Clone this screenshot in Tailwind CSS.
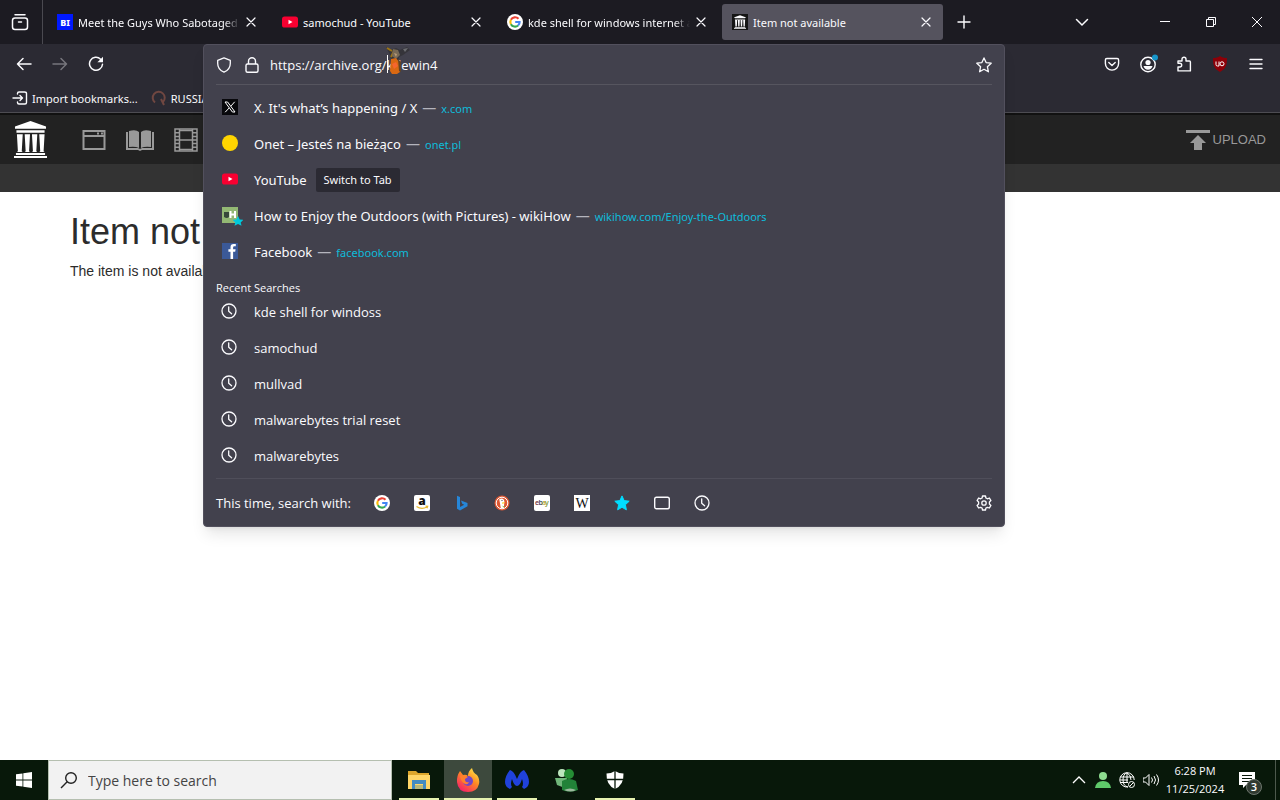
<!DOCTYPE html>
<html lang="en">
<head>
<meta charset="utf-8">
<title>Item not available</title>
<script src="https://cdn.jsdelivr.net/npm/@tailwindcss/browser@4"></script>
</head>
<body class="flex h-screen flex-col overflow-hidden bg-white font-['Open_Sans',sans-serif] text-[#fbfbfe]">
<svg class="hidden" aria-hidden="true">
  <symbol id="x" viewBox="0 0 16 16"><path d="M4 4l8 8M12 4l-8 8" fill="none" stroke="currentColor" stroke-width="1.2" stroke-linecap="round"/></symbol>
  <symbol id="yt" viewBox="0 0 16 16"><rect y="2.5" width="16" height="11" rx="2.6" fill="#f80031"/><path d="M6.500 5.700v4.600l4-2.300z" fill="#fff"/></symbol>
  <symbol id="google" viewBox="0 0 16 16"><circle cx="8" cy="8" r="8" fill="#fff"/><g fill="none" stroke-width="2.1"><path d="M11.500 4.800A4.700 4.700 0 0 0 3.900 5.800" stroke="#ea4335"/><path d="M3.900 5.800a4.700 4.700 0 0 0 0 4.400" stroke="#fbbc05"/><path d="M3.900 10.200a4.700 4.700 0 0 0 7.200 1.300" stroke="#34a853"/><path d="M11.100 11.500A4.600 4.600 0 0 0 12.600 8H8.200" stroke="#4285f4"/></g></symbol>
  <symbol id="temple" viewBox="0 0 34 38"><path d="M17 0L1 5.500V8h32V5.500zM2.500 9.500h29V12h-29zM3 13.500h6l-1 17.500 1 1H3l1-1zM11 13.500h5.500l-1 17.500 1 1H11l1-1zM18.500 13.500H24l-1 17.500 1 1h-5.500l1-1zM26 13.500h5.500l-1 17.500 1 1H26l1-1zM2 33h30v2H2zM0 36h34v2H0z" fill="currentColor"/></symbol>
  <symbol id="clock" viewBox="0 0 16 16"><g fill="none" stroke="currentColor" stroke-width="1.3" stroke-linecap="round" stroke-linejoin="round"><circle cx="8" cy="8" r="7"/><path d="M7.700 3.800v4.400l2.900 2.600"/></g></symbol>
  <symbol id="star" viewBox="0 0 16 16"><path d="M8 .9l2.100 4.700 5.100.6-3.800 3.500 1 5.100L8 12.300l-4.400 2.500 1-5.100L.8 6.200l5.100-.6z" stroke-linejoin="round"/></symbol>
</svg>

<div class="relative shrink-0 font-['Noto_Sans',sans-serif] text-[11px]">
  <!-- Tab strip -->
  <header class="flex h-11 items-center bg-[#1c1b22]">
    <button aria-label="Firefox View" class="mr-1 flex h-11 w-[43px] shrink-0 items-center justify-center border-r border-[#4a4950] pr-[2px]">
      <svg class="size-[18px]" viewBox="0 0 18 18" fill="none" stroke="currentColor" stroke-width="1.500" stroke-linecap="round"><path d="M4 1.800h10"/><rect x="1.500" y="5" width="15" height="11.500" rx="2.500"/><path d="M7.500 9h3"/></svg>
    </button>
    <nav class="flex min-w-0 items-center gap-1" aria-label="Tabs">
      <div class="flex h-9 w-[221px] min-w-0 items-center pl-[10px] pr-[9px]">
        <svg class="size-4 shrink-0" viewBox="0 0 16 16"><rect width="16" height="16" fill="#0019ff"/><text x="8" y="11.500" text-anchor="middle" font-size="9" font-weight="800" fill="#fff">BI</text></svg>
        <a href="#" class="ml-[5px] flex-1 overflow-hidden whitespace-nowrap pt-[2px] mask-r-from-90%">Meet the Guys Who Sabotaged</a>
        <button aria-label="Close tab" class="ml-[3px]"><svg class="size-4"><use href="#x"/></svg></button>
      </div>
      <div class="flex h-9 w-[221px] min-w-0 items-center pl-[10px] pr-[9px]">
        <svg class="size-4 shrink-0"><use href="#yt"/></svg>
        <a href="#" class="ml-[5px] flex-1 overflow-hidden whitespace-nowrap pt-[2px]">samochud - YouTube</a>
        <button aria-label="Close tab" class="ml-[3px]"><svg class="size-4"><use href="#x"/></svg></button>
      </div>
      <div class="flex h-9 w-[221px] min-w-0 items-center pl-[10px] pr-[9px]">
        <svg class="size-4 shrink-0"><use href="#google"/></svg>
        <a href="#" class="ml-[5px] flex-1 overflow-hidden whitespace-nowrap pt-[2px] mask-r-from-90%">kde shell for windows internet archive</a>
        <button aria-label="Close tab" class="ml-[3px]"><svg class="size-4"><use href="#x"/></svg></button>
      </div>
      <div class="flex h-9 w-[221px] min-w-0 items-center rounded-[3px] bg-[#55535e] pl-[10px] pr-[9px]">
        <span class="flex size-4 shrink-0 items-center justify-center bg-[#151515]"><svg class="h-[14px] w-3"><use href="#temple"/></svg></span>
        <a href="#" class="ml-[5px] flex-1 overflow-hidden whitespace-nowrap pt-[2px]">Item not available</a>
        <button aria-label="Close tab" class="ml-[3px]"><svg class="size-4"><use href="#x"/></svg></button>
      </div>
    </nav>
    <button aria-label="New tab" class="ml-[13px] shrink-0"><svg class="size-4" viewBox="0 0 16 16"><path d="M8 2v12M2 8h12" stroke="currentColor" stroke-width="1.400" stroke-linecap="round"/></svg></button>
    <div class="ml-auto flex shrink-0 items-center">
      <button aria-label="List all tabs" class="mr-[52px]"><svg class="size-4" viewBox="0 0 16 16"><path d="M2.500 5.500L8 11l5.500-5.500" fill="none" stroke="currentColor" stroke-width="1.500" stroke-linecap="round"/></svg></button>
      <button aria-label="Minimize" class="flex w-[46px] justify-center"><svg class="size-3" viewBox="0 0 12 12"><path d="M1 5.500h10" stroke="currentColor"/></svg></button>
      <button aria-label="Restore" class="flex w-[46px] justify-center"><svg class="size-3" viewBox="0 0 12 12" fill="none" stroke="currentColor"><path d="M1.500 3.500h7v7h-7zM3.500 3.500v-2h7v7h-2"/></svg></button>
      <button aria-label="Close" class="flex w-[46px] justify-center"><svg class="size-3" viewBox="0 0 12 12"><path d="M1 1l10 10M11 1L1 11" stroke="currentColor"/></svg></button>
    </div>
  </header>

  <!-- Toolbar -->
  <div class="flex h-10 items-center justify-between bg-[#2b2a33] px-2">
    <div class="flex gap-1">
      <button aria-label="Back" class="flex size-8 items-center justify-center"><svg class="size-4" viewBox="0 0 16 16" fill="none" stroke="currentColor" stroke-width="1.500" stroke-linecap="round" stroke-linejoin="round"><path d="M15 8H1.500M7 2.500L1.500 8 7 13.500"/></svg></button>
      <button aria-label="Forward" class="flex size-8 items-center justify-center text-[#77767d]"><svg class="size-4" viewBox="0 0 16 16" fill="none" stroke="currentColor" stroke-width="1.500" stroke-linecap="round" stroke-linejoin="round"><path d="M1 8h13.500M9 2.500L14.500 8 9 13.500"/></svg></button>
      <button aria-label="Reload" class="flex size-8 items-center justify-center"><svg class="size-4" viewBox="0 0 16 16"><path d="M12.600 3.200A6.500 6.500 0 1 0 14.500 8.300" fill="none" stroke="currentColor" stroke-width="1.500" stroke-linecap="round"/><path d="M15 .7v5.600H9.400z" fill="currentColor"/></svg></button>
    </div>
    <div class="flex gap-1">
      <button aria-label="Save to Pocket" class="flex size-8 items-center justify-center"><svg class="size-4" viewBox="0 0 16 16" fill="none" stroke="currentColor" stroke-width="1.400" stroke-linecap="round" stroke-linejoin="round"><path d="M2.800 2.500h10.400c.8 0 1.400.6 1.400 1.400V7.500a6.600 6.600 0 0 1-13.200 0V3.900c0-.8.6-1.400 1.400-1.400z"/><path d="M4.800 6.500L8 9.500l3.200-3"/></svg></button>
      <button aria-label="Account" class="flex size-8 items-center justify-center"><svg class="size-5" viewBox="0 0 20 20"><circle cx="10" cy="10.500" r="7.200" fill="none" stroke="currentColor" stroke-width="1.400"/><circle cx="10" cy="8.500" r="2.600" fill="currentColor"/><path d="M5.500 12h9c-.5 2.400-2.300 3.700-4.500 3.700s-4-1.300-4.500-3.700z" fill="currentColor"/><circle cx="17" cy="3.500" r="3" fill="#1795c9"/></svg></button>
      <button aria-label="Extensions" class="flex size-8 items-center justify-center"><svg class="size-4" viewBox="0 0 16 16" fill="none" stroke="currentColor" stroke-width="1.400" stroke-linejoin="round"><path d="M2 14.900V11h1.800a1.900 1.900 0 0 0 0-3.800H2V5h4V3.200a2 2 0 0 1 4 0V5h3.400c.6 0 1 .4 1 1v8.900z"/></svg></button>
      <button aria-label="uBlock Origin" class="flex size-8 items-center justify-center"><svg class="size-4" viewBox="0 0 16 16"><path d="M8 0c2 1.400 4.200 1.900 7 2.100 0 6.400-.6 10.400-7 13.900C1.600 12.500 1 8.500 1 2.100 3.800 1.900 6 1.400 8 0z" fill="#8c0008"/><g fill="none" stroke="#fff"><path d="M4 5.500v3q0 1.500 1.500 1.500H7V5.500"/><circle cx="10" cy="7.800" r="2"/></g></svg></button>
      <button aria-label="Menu" class="flex size-8 items-center justify-center"><svg class="size-4" viewBox="0 0 16 16"><path d="M2 3.500h12M2 8h12M2 12.500h12" stroke="currentColor" stroke-width="1.400" stroke-linecap="round"/></svg></button>
    </div>
  </div>

  <!-- Bookmarks bar -->
  <div class="flex h-[29px] items-center border-b border-[#4d4c52] bg-[#2b2a33] pl-3">
    <svg class="size-4" viewBox="0 0 16 16" fill="none" stroke="currentColor" stroke-width="1.400" stroke-linecap="round" stroke-linejoin="round"><path d="M5.500 4V3.500q0-1.500 1.500-1.500h5.500Q14.500 2 14.500 3.500v9q0 1.500-1.500 1.500H7q-1.500 0-1.500-1.500V12M1 8h9.500M8 5.500L10.500 8 8 10.500"/></svg>
    <a href="#" class="ml-1 pt-[2px]">Import bookmarks...</a>
    <svg class="ml-[13px] size-4" viewBox="0 0 16 16" fill="none" stroke="#704741" stroke-width="2"><path d="M4 12.500A6 6 0 1 1 12 12M10 9l3 6"/></svg>
    <a href="#" class="ml-1 pt-[2px]">RUSSIA</a>
  </div>

  <!-- Address bar with its suggestions -->
  <section class="absolute left-[203px] right-[275px] top-11 z-10 rounded-[4px] border border-[#52505d] bg-[#42414d] px-3 font-['Open_Sans',sans-serif] shadow-lg">
    <div class="flex h-10 items-center border-b border-[#56555f]">
      <svg class="size-4" viewBox="0 0 16 16" fill="none" stroke="currentColor" stroke-width="1.300" stroke-linejoin="round"><path d="M8 .9l6.300 2.400v3.200c0 4.200-2.100 6.900-6.300 8.700-4.200-1.800-6.300-4.500-6.300-8.700V3.300z"/></svg>
      <svg class="ml-3 size-4" viewBox="0 0 16 16" fill="none" stroke="currentColor" stroke-width="1.400"><rect x="2" y="7" width="12" height="8.200" rx="1.500"/><path d="M4.500 7V4.300a3.500 3.500 0 0 1 7 0V7"/></svg>
      <input aria-label="Address" value="https://archive.org/kdewin4" class="ml-[10px] min-w-0 flex-1 bg-transparent pt-[2px] text-[13px] outline-none">
      <button aria-label="Bookmark this page"><svg class="size-4" fill="none" stroke="currentColor" stroke-width="1.300"><use href="#star"/></svg></button>
    </div>
    <ul class="mt-1 font-['Noto_Sans',sans-serif] text-[13px]">
      <li class="flex h-9 items-center">
        <svg class="mx-[6px] size-4" viewBox="0 0 16 16"><rect width="16" height="16" fill="#08080c"/><g stroke="#fff" fill="none"><path d="M3 3h2.600L13 13h-2.600z"/><path d="M12.700 2.800L8.800 7.200M7.200 8.900L3.200 13.200"/></g></svg>
        <p class="ml-[10px] pt-[3px]"><a href="#">X. It's what’s happening / X</a><span class="mx-[5px] text-sm leading-4 text-[#b4b4bd]">—</span><a href="#" class="text-[11px] text-[#00ddff]/80">x.com</a></p>
      </li>
      <li class="flex h-9 items-center">
        <svg class="mx-[6px] size-4" viewBox="0 0 16 16"><circle cx="8" cy="8" r="8" fill="#ffd500"/></svg>
        <p class="ml-[10px] pt-[3px]"><a href="#">Onet – Jesteś na bieżąco</a><span class="mx-[5px] text-sm leading-4 text-[#b4b4bd]">—</span><a href="#" class="text-[11px] text-[#00ddff]/80">onet.pl</a></p>
      </li>
      <li class="flex h-9 items-center">
        <svg class="mx-[6px] size-4"><use href="#yt"/></svg>
        <a href="#" class="ml-[10px] pt-[3px]">YouTube</a><button class="ml-[9px] mt-[2px] h-6 rounded-[2px] bg-[#2b2a33] px-2 text-[11px]">Switch to Tab</button>
      </li>
      <li class="flex h-9 items-center">
        <svg class="ml-[6px] mr-px h-[21px] w-[21px]" viewBox="0 -2 21 21"><path d="M0 0h16v16H0z" fill="#93b874"/><path d="M2 5h5v5q-2 2-5 0z" fill="#37483a"/><path d="M8.500 4v7M13 4v7M8.500 7.500H13" stroke="#fff" stroke-width="2"/><path d="M16 9l1.700 3.400 3.800.4-2.800 2.600.8 3.400-3.500-1.700-3.500 1.700.8-3.400-2.800-2.600 3.800-.4z" fill="#00c8dc"/></svg>
        <p class="ml-[10px] pt-[3px]"><a href="#">How to Enjoy the Outdoors (with Pictures) - wikiHow</a><span class="mx-[5px] text-sm leading-4 text-[#b4b4bd]">—</span><a href="#" class="text-[11px] text-[#00ddff]/80">wikihow.com/Enjoy-the-Outdoors</a></p>
      </li>
      <li class="flex h-9 items-center">
        <svg class="mx-[6px] size-4" viewBox="0 0 16 16"><path d="M0 0h16v16H0z" fill="#3b5998"/><path d="M13.800 3.200h-1.500q-1.200 0-1.200 1.300V6.300h2.500l-.4 2.400h-2.100V16H8.500V8.700H6.400V6.300h2.100V4.200q0-3.200 3.200-3.200h2.100z" fill="#fff"/></svg>
        <p class="ml-[10px] pt-[3px]"><a href="#">Facebook</a><span class="mx-[5px] text-sm leading-4 text-[#b4b4bd]">—</span><a href="#" class="text-[11px] text-[#00ddff]/80">facebook.com</a></p>
      </li>
    </ul>
    <h2 class="mt-[11px] text-[11px] leading-4">Recent Searches</h2>
    <ul class="-mt-[3px] text-[13px]">
      <li class="flex h-9 items-center"><svg class="mx-[5px] size-4"><use href="#clock"/></svg><a href="#" class="ml-3 pt-1">kde shell for windoss</a></li>
      <li class="flex h-9 items-center"><svg class="mx-[5px] size-4"><use href="#clock"/></svg><a href="#" class="ml-3 pt-1">samochud</a></li>
      <li class="flex h-9 items-center"><svg class="mx-[5px] size-4"><use href="#clock"/></svg><a href="#" class="ml-3 pt-1">mullvad</a></li>
      <li class="flex h-9 items-center"><svg class="mx-[5px] size-4"><use href="#clock"/></svg><a href="#" class="ml-3 pt-1">malwarebytes trial reset</a></li>
      <li class="flex h-9 items-center"><svg class="mx-[5px] size-4"><use href="#clock"/></svg><a href="#" class="ml-3 pt-1">malwarebytes</a></li>
    </ul>
    <div class="mt-[5px] flex h-12 items-center border-t border-[#4f4e5a]">
      <span class="w-[158px] pt-[3px] text-[13px]">This time, search with:</span>
      <div class="flex gap-6">
        <button aria-label="Google"><svg class="size-4"><use href="#google"/></svg></button>
        <button aria-label="Amazon"><svg class="size-4" viewBox="0 0 16 16"><rect width="16" height="16" rx="2" fill="#fff"/><text x="8" y="10" text-anchor="middle" font-size="12" font-weight="800" fill="#111">a</text><path d="M2.500 11.500q5 3.500 10.500.5M11.500 11l2.200.3-.7 2" fill="none" stroke="#e8b931" stroke-width="1.200"/></svg></button>
        <button aria-label="Bing"><svg class="size-4" viewBox="0 0 16 16"><path d="M3 .8l3 1.100v10.200l4.200-2.400-2-1L7 5.600l6.500 2.300v3.300L6 15.500l-3-1.800z" fill="#2686d8"/></svg></button>
        <button aria-label="DuckDuckGo"><svg class="size-4" viewBox="0 0 16 16"><circle cx="8" cy="8" r="7.500" fill="#de5833"/><circle cx="8" cy="8" r="5.800" fill="none" stroke="#fff"/><path d="M5.200 4.200q4.500-2 5.200 2.400l-.6 6.300-3 .3-1-6z" fill="#fff"/><path d="M8 7.500l3.500-.3-3 1.800z" fill="#fdd20a"/><circle cx="8" cy="5.500" r=".6" fill="#234"/><path d="M7.500 10.500l3 1v1.200z" fill="#65bc46"/></svg></button>
        <button aria-label="eBay"><svg class="size-4" viewBox="0 0 16 16"><rect width="16" height="16" rx="2" fill="#fff"/><text y="10" font-size="7" font-weight="600"><tspan x="1" fill="#7a3540">e</tspan><tspan x="4.500" fill="#303c60">b</tspan><tspan x="8" fill="#b9a030">a</tspan><tspan x="11" fill="#7d9b30">y</tspan></text></svg></button>
        <button aria-label="Wikipedia"><svg class="size-4" viewBox="0 0 16 16"><path d="M0 0h16v16H0z" fill="#fff"/><text x="8" y="12.500" text-anchor="middle" font-family="Liberation Serif" font-size="14" fill="#111">W</text></svg></button>
        <button aria-label="Bookmarks"><svg class="size-4" fill="#00ddff" stroke="#00ddff"><use href="#star"/></svg></button>
        <button aria-label="Tabs"><svg class="size-4" viewBox="0 0 16 16"><rect x=".7" y="2.200" width="14.600" height="11.600" rx="1.800" fill="none" stroke="currentColor" stroke-width="1.400"/></svg></button>
        <button aria-label="History"><svg class="size-4"><use href="#clock"/></svg></button>
      </div>
      <button aria-label="Search settings" class="ml-auto"><svg class="size-4" viewBox="0 0 16 16" fill="none" stroke="currentColor" stroke-width="1.300" stroke-linejoin="round"><path d="M6.500 1h3l.4 2 1.500.8 2-.8 1.500 2.600L13.400 7v2l1.500 1.400-1.500 2.600-2-.7-1.500.8-.4 1.900h-3l-.4-1.900-1.500-.8-2 .7-1.500-2.600L2.600 9V7L1.100 5.600 2.600 3l2 .8L6.100 3z"/><circle cx="8" cy="8" r="2.200"/></svg></button>
    </div>
  </section>
  <!-- Mouse pointer figure and text caret -->
  <svg class="pointer-events-none absolute left-[386px] top-[45px] z-20 h-[31px] w-[26px]" viewBox="0 0 26 31"><path d="M1.500 10v18" stroke="#fff"/><path d="M0 2l5 3 5-2 4 2 7-3 3 3-7 5-4 2-1 5H6L4 10z" fill="#35343a"/><path d="M1 3l5 3M5 12l3-6" stroke="#9c7415" stroke-width="2"/><path d="M7 4l5 1 2 5-4 4-4-3z" fill="#776956"/><path d="M8 8l3 1-1 3z" fill="#b99b76"/><path d="M5 14l5-1 3 4 1 10-3 2H6l-2-3z" fill="#d96812"/><path d="M6 19l4-2 2 4-4 3z" fill="#f5652e"/><path d="M12 14l3 3v10l-2-1z" fill="#624324"/><path d="M17 4l5-1-3 4z" fill="#6c6d72"/></svg>
</div>

<!-- Page -->
<main class="flex-1 overflow-hidden bg-white font-['Liberation_Sans',Arial,sans-serif] text-[#2c2c2c]">
  <div class="flex h-[51px] items-center border-t-2 border-[#111] bg-[#222] px-[14px] text-[#999]">
    <a href="#" aria-label="Internet Archive" class="text-white"><svg class="h-[37px] w-[33px]"><use href="#temple"/></svg></a>
    <nav class="ml-[35px] flex items-center gap-5" aria-label="Media">
      <a href="#" aria-label="Web"><svg class="h-6 w-6" viewBox="0 0 24 24" fill="none" stroke="currentColor" stroke-width="2"><path d="M1.500 3h21v18h-21zM1.500 8h21"/><path d="M15 5.500h2M19 5.500h2"/></svg></a>
      <a href="#" aria-label="Texts"><svg class="h-6 w-7" viewBox="0 0 28 24"><path d="M0 4h2v16h10l2 1 2-1h10V4h2v18H16l-2 1-2-1H0z" fill="currentColor"/><path d="M3 3q7-2 10 1v16q-4-2-10-1zM25 3q-7-2-10 1v16q4-2 10-1z" fill="currentColor"/></svg></a>
      <a href="#" aria-label="Video"><svg class="h-6 w-6" viewBox="0 0 24 24" fill="none" stroke="currentColor" stroke-width="1.500"><path d="M1 1h22v22H1zM5.500 1v22M18.500 1v22M5.500 12h13M1 4.700h4.500M1 8.400h4.500M1 12h4.500M1 15.600h4.500M1 19.300h4.500M18.500 4.700H23M18.500 8.400H23M18.500 12H23M18.500 15.600H23M18.500 19.300H23"/><path d="M6 2.500h12M6 21.500h12"/></svg></a>
    </nav>
    <a href="#" class="ml-auto flex items-center gap-[3px] text-[13px]"><svg class="h-6 w-6" viewBox="0 0 24 24" fill="currentColor"><path d="M0 2h24v3H0zM12 7l8 8h-4v7H8v-7H4z"/></svg>UPLOAD</a>
  </div>
  <div class="h-7 bg-[#333]"></div>
  <div class="px-[70px]">
    <h1 class="mt-5 text-4xl leading-10">Item not available</h1>
    <p class="mt-[9px] text-sm">The item is not available</p>
  </div>
</main>

<!-- Taskbar -->
<footer class="flex h-10 shrink-0 items-center bg-[#08180a]">
  <button aria-label="Start" class="flex w-12 justify-center"><svg class="size-4" viewBox="0 0 16 16" fill="#fff"><path d="M0 2.300L6.500 1.400V7.600H0zM7.300 1.300L16 0v7.600H7.300zM0 8.400h6.500v6.200L0 13.700zM7.300 8.400H16V16l-8.700-1.300z"/></svg></button>
  <label class="flex h-10 w-[344px] items-center border border-[#b5bfb0] bg-[#f2f2f2] pl-[11px] text-[#222]">
    <svg class="size-[18px]" viewBox="0 0 18 18" fill="none" stroke="currentColor" stroke-width="1.400"><circle cx="11" cy="7" r="5.300"/><path d="M7.200 10.800L1 17"/></svg>
    <input aria-label="Search" placeholder="Type here to search" class="ml-[10px] min-w-0 flex-1 bg-transparent pt-[2px] text-sm outline-none placeholder:text-[#444]">
  </label>
  <div class="ml-[3px] flex h-10 gap-px">
    <button aria-label="File Explorer" class="flex h-10 w-12 flex-col items-center justify-end gap-[6px]"><svg class="h-6 w-6" viewBox="0 0 24 24"><path d="M1 3h8l2 2h11v16H1z" fill="#dda62c"/><path d="M1 7h22v14H1z" fill="#ffd567"/><path d="M5 12h14v9h-3v-5H8v5H5z" fill="#438bc1"/><path d="M8 17h8v4H8z" fill="#b7b77a"/></svg><span class="h-[2px] w-10 bg-[#e6f2b0]"></span></button>
    <button aria-label="Firefox" class="flex h-10 w-12 flex-col items-center justify-end gap-[6px] bg-[#3d493d]"><svg class="h-6 w-6" viewBox="0 0 24 24"><defs><linearGradient id="fx" x1=".9" y1="0" x2=".2" y2="1"><stop stop-color="#fff34d"/><stop offset=".45" stop-color="#ff8b22"/><stop offset="1" stop-color="#f5196d"/></linearGradient></defs><path d="M4 3l3 4q3-1 5 1 0-5 4-8 1 5 5 7 3 4 2 9-2 8-11 8Q2 24 1 14 .500 8 4 3z" fill="url(#fx)"/><circle cx="12" cy="13" r="5" fill="#7347c5"/><path d="M4 8q5-2 8 1l-3 2q0 4 4 3-1 3-4 2-4-2-5-8z" fill="#ff802b"/></svg><span class="h-[2px] w-12 bg-[#e6f2b0]"></span></button>
    <button aria-label="Malwarebytes" class="flex h-10 w-12 flex-col items-center justify-end gap-[6px]"><svg class="h-6 w-6" viewBox="0 0 24 24"><path d="M5 2Q9 3 12 11 15 3 19 2q5 6 5 12 0 5-5 7l-2-2q2-3 0-8-2 7-5 7t-5-7q-2 5 0 8l-2 2q-5-2-5-7Q0 8 5 2z" fill="#2042db"/></svg><span class="h-[2px] w-10 bg-[#e6f2b0]"></span></button>
    <button aria-label="Messenger" class="flex h-10 w-12 items-center justify-center"><svg class="h-6 w-6" viewBox="0 0 24 24"><circle cx="8" cy="5" r="4" fill="#bce5bd"/><path d="M1 10h12l-2 10-8-3z" fill="#70b77a"/><circle cx="15" cy="6" r="5" fill="#258c34"/><path d="M8 13q7-4 14 0l2 9q-8 3-16 0z" fill="#228238"/><path d="M10 22q6-3 12 0-5 3-12 0z" fill="#9cba9e"/></svg></button>
    <button aria-label="Windows Security" class="flex h-10 w-12 flex-col items-center justify-end gap-[9px]"><svg class="h-[18px] w-[18px]" viewBox="0 0 18 18"><path d="M9 0q4 2.500 8.500 2.500Q18 14 9 18 0 14 .5 2.500 5 2.500 9 0z" fill="#fff"/><path d="M9 0v18M0 8.500h18" stroke="#08180a" stroke-width="1.300"/></svg><span class="h-[2px] w-10 bg-[#e6f2b0]"></span></button>
  </div>
  <div class="ml-auto flex h-10 items-center">
    <div class="flex items-center gap-2">
      <button aria-label="Show hidden icons"><svg class="size-4" viewBox="0 0 16 16"><path d="M2 11l6-6 6 6" fill="none" stroke="#fff" stroke-width="1.300"/></svg></button>
      <svg class="size-4" viewBox="0 0 16 16"><circle cx="8" cy="4" r="4" fill="#8edc90"/><path d="M0 16q1-7 8-7t8 7z" fill="#5fc96a"/></svg>
      <svg class="size-4" viewBox="0 0 16 16" fill="none" stroke="#fff"><path d="M9 15A7.200 7.200 0 1 1 15.200 8M9 15Q4 14 4 8t4-7.200Q12 3 12 8M8 .8v10M1 5h14M1 10.500h8M.8 8H9"/><circle cx="12.500" cy="12.500" r="3"/><path d="M10.500 14.500l4-4"/></svg>
      <svg class="size-4" viewBox="0 0 16 16" fill="none" stroke="#fff"><path d="M0 6h2.500L6 2.500v11L2.500 10H0zM8.500 5.500q2 2.500 0 5M11 4q3 4 0 8M13.500 2.500q4 5.500 0 11"/></svg>
    </div>
    <time class="ml-[6px] w-[60px] whitespace-nowrap text-center text-[11px] leading-[18px]">6:28 PM<br>11/25/2024</time>
    <button aria-label="3 notifications" class="relative ml-[13px] mr-[11px] h-10 w-[26px]"><svg class="h-10 w-[26px]" viewBox="0 0 26 40"><path d="M1 12h16v13H8l-3 3v-3H1z" fill="#fff"/><path d="M4 15.500h10M4 18.500h10M4 21.500h7" stroke="#08180a"/><circle cx="16" cy="27" r="7.500" fill="#303a31" stroke="#6d756d"/><text x="16" y="31" text-anchor="middle" font-size="11" font-weight="600" fill="#fff">3</text></svg></button>
    <span class="mr-1 h-10 w-px bg-[#4d594d]"></span>
  </div>
</footer>
</body>
</html>
